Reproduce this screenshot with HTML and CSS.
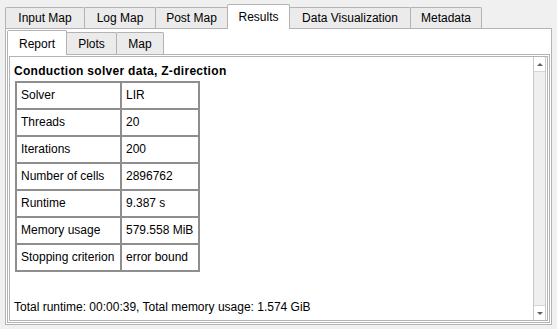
FILE: index.html
```html
<!DOCTYPE html>
<html>
<head>
<meta charset="utf-8">
<link rel="stylesheet" href="styles.css">
</head>
<body>
<div class="tabwidget">
  <div class="tabbar">
    <div class="tab t-input">Input Map</div>
    <div class="tab t-log">Log Map</div>
    <div class="tab t-post">Post Map</div>
    <div class="tab selected t-results">Results</div>
    <div class="tab t-dataviz">Data Visualization</div>
    <div class="tab t-meta">Metadata</div>
  </div>
  <div class="pane">
    <div class="subtabbar">
      <div class="subtab selected s-report">Report</div>
      <div class="subtab s-plots">Plots</div>
      <div class="subtab s-map">Map</div>
    </div>
    <div class="subpane">
      <div class="textbox">
        <div class="content">
          <div class="heading">Conduction solver data, Z-direction</div>
          <table class="report">
            <colgroup><col class="c1"><col class="c2"></colgroup>
            <tr><td>Solver</td><td>LIR</td></tr>
            <tr><td>Threads</td><td>20</td></tr>
            <tr><td>Iterations</td><td>200</td></tr>
            <tr><td>Number of cells</td><td>2896762</td></tr>
            <tr><td>Runtime</td><td>9.387 s</td></tr>
            <tr><td>Memory usage</td><td>579.558 MiB</td></tr>
            <tr><td>Stopping criterion</td><td>error bound</td></tr>
          </table>
          <div class="footer">Total runtime: 00:00:39, Total memory usage: 1.574 GiB</div>
        </div>
        <div class="scrollbar">
          <div class="arrow up"><span class="tri-up"></span></div>
          <div class="track"></div>
          <div class="arrow down"><span class="tri-down"></span></div>
        </div>
      </div>
    </div>
  </div>
</div>
</body>
</html>
```
FILE: styles.css
```css
html, body {
  margin: 0;
  padding: 0;
}
body {
  background: #f0f0f0;
  font-family: "Liberation Sans", Arial, sans-serif;
  font-size: 12px;
  color: #000;
  width: 557px;
  height: 329px;
  overflow: hidden;
}
.tabwidget {
  margin: 4px 5px 0 5px;
  width: 547px;
}
.tabbar {
  display: flex;
  align-items: flex-end;
  height: 24px;
  position: relative;
  z-index: 1;
}
.tab {
  box-sizing: border-box;
  height: 21px;
  border: 1px solid #b3b3b3;
  border-bottom: none;
  border-radius: 2px 2px 0 0;
  background: #ebebeb;
  text-align: center;
  line-height: 14px;
  padding-top: 3px;
  margin-left: -1px;
  white-space: nowrap;
}
.tab:first-child { margin-left: 0; }
.tab.selected {
  height: 25px;
  margin-bottom: -1px;
  background: #fff;
  padding-top: 5px;
  position: relative;
  z-index: 2;
}
.t-input { width: 80px; }
.t-log { width: 72px; }
.t-post { width: 73px; }
.t-results { width: 63px; }
.t-dataviz { width: 122px; }
.t-meta { width: 72px; }

.pane {
  box-sizing: border-box;
  height: 297px;
  border: 1px solid #b3b3b3;
  background: #fff;
  padding: 1px 1px 1px 1px;
  display: flex;
  flex-direction: column;
}
.subtabbar {
  display: flex;
  align-items: flex-end;
  height: 24px;
  position: relative;
  z-index: 1;
}
.subtab {
  box-sizing: border-box;
  height: 22px;
  border: 1px solid #b3b3b3;
  border-bottom: none;
  border-radius: 2px 2px 0 0;
  background: #ebebeb;
  text-align: center;
  line-height: 14px;
  padding-top: 4px;
  margin-left: -1px;
}
.subtab:first-child { margin-left: 0; }
.subtab.selected {
  height: 25px;
  margin-bottom: -1px;
  background: #fff;
  padding-top: 6px;
  position: relative;
  z-index: 2;
}
.s-report { width: 60px; }
.s-plots { width: 51px; }
.s-map { width: 48px; }

.subpane {
  flex: 1;
  box-sizing: border-box;
  border: 1px solid #b3b3b3;
  padding: 1px;
  display: flex;
}
.textbox {
  flex: 1;
  box-sizing: border-box;
  border: 1px solid #b3b3b3;
  display: flex;
}
.content {
  flex: 1;
  padding: 7px 0 0 4px;
}
.heading {
  font-weight: bold;
  line-height: 14px;
  letter-spacing: 0.3px;
}
.report {
  margin-top: 3px;
  margin-left: 1px;
  border: 1px solid #8e8e8e;
  border-spacing: 0;
  table-layout: fixed;
  width: 185px;
}
.report col.c1 { width: 105px; }
.report col.c2 { width: 78px; }
.report td {
  border: 1px solid #8e8e8e;
  height: 27px;
  box-sizing: border-box;
  padding: 0 4px 1px 4px;
  line-height: 14px;
  white-space: nowrap;
  vertical-align: middle;
}
.footer {
  margin-top: 28px;
  line-height: 14px;
}
.scrollbar {
  box-sizing: border-box;
  width: 13px;
  margin-right: 1px;
  border-left: 1px solid #c9c9c9;
  border-right: 1px solid #c9c9c9;
  display: flex;
  flex-direction: column;
  background: #efefef;
}
.arrow {
  height: 14px;
  background: #fff;
  display: flex;
  align-items: center;
  justify-content: center;
}
.arrow.up { border-bottom: 1px solid #d6d6d6; }
.arrow.down { border-top: 1px solid #d6d6d6; }
.track { flex: 1; }
.tri-up {
  width: 0;
  height: 0;
  border-left: 3.5px solid transparent;
  border-right: 3.5px solid transparent;
  border-bottom: 3px solid #606060;
}
.tri-down {
  width: 0;
  height: 0;
  border-left: 3.5px solid transparent;
  border-right: 3.5px solid transparent;
  border-top: 3px solid #606060;
}
```
